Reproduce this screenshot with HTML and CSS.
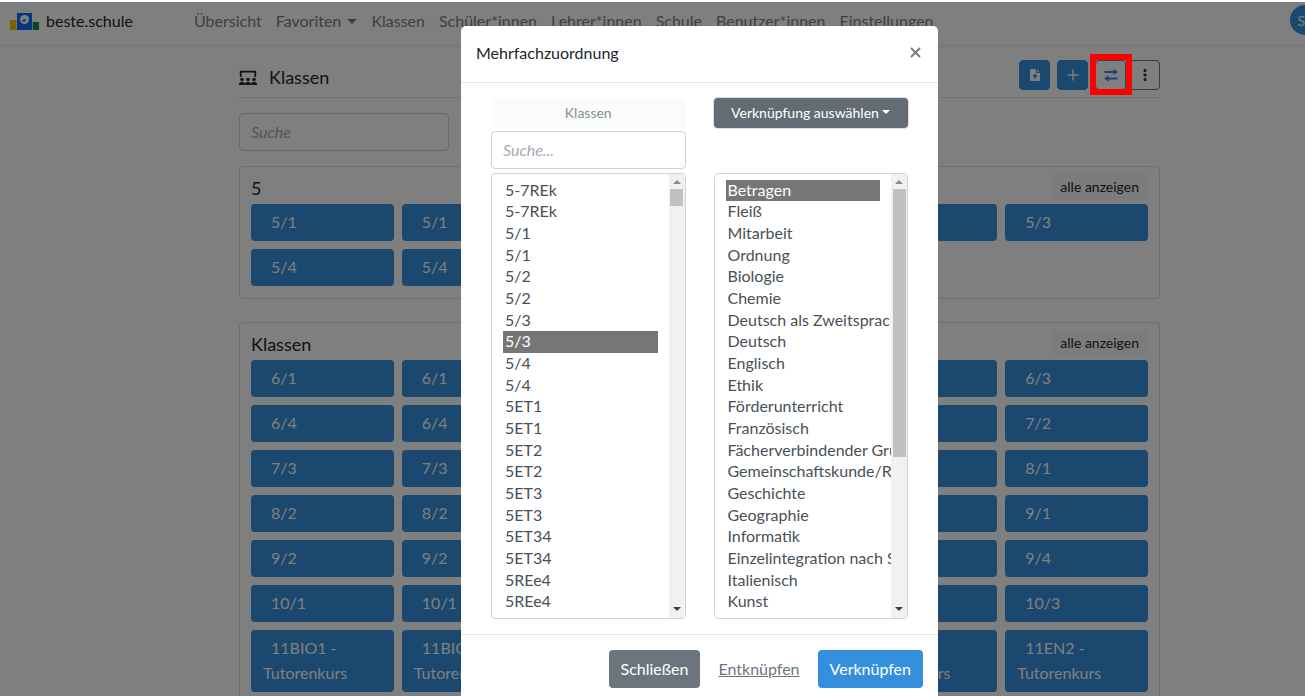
FILE: index.html
```html
<!DOCTYPE html>
<html lang="de">
<head>
<meta charset="utf-8">
<title>beste.schule – Klassen</title>
<link rel="stylesheet" href="styles.css">
</head>
<body>
<div class="app">
  <header class="navbar">
    <a class="brand" href="#">
      <svg class="brand-logo" width="30" height="20" viewBox="0 -3 30 20" aria-hidden="true">
        <rect x="0" y="7" width="6.500" height="10" fill="#ffc107"/>
        <rect x="7" y="0" width="15" height="17" fill="#0d6efd"/>
        <rect x="22.700" y="9" width="6.300" height="8" fill="#198754"/>
        <circle cx="14.500" cy="6.500" r="4.500" fill="#fff"/>
        <path d="M15.500 6v2.500h-3.500l1-2z" fill="#0d6efd"/>
      </svg>
      <span>beste.schule</span>
    </a>
    <nav class="menu">
      <a href="#">Übersicht</a>
      <a href="#">Favoriten <span class="caret caret-nav"></span></a>
      <a href="#">Klassen</a>
      <a href="#">Schüler*innen</a>
      <a href="#">Lehrer*innen</a>
      <a href="#">Schule</a>
      <a href="#">Benutzer*innen</a>
      <a href="#">Einstellungen</a>
    </nav>
    <button class="avatar" type="button" aria-label="Profil">SL</button>
  </header>

  <main class="content">
    <div class="page-head">
      <svg class="page-icon" width="18" height="16" viewBox="0 0 18 16" aria-hidden="true">
        <path d="M1.700 7V1.700h14.600V7" fill="none" stroke="#212529" stroke-width="1.800"/>
        <g fill="#212529">
          <circle cx="3" cy="9.500" r="1.700"/><circle cx="9" cy="9.500" r="1.700"/><circle cx="15" cy="9.500" r="1.700"/>
          <path d="M0 15c0-2 1-3 2-3h2c1 0 2 1 2 3zM6 15c0-2 1-3 2-3h2c1 0 2 1 2 3zM12 15c0-2 1-3 2-3h2c1 0 2 1 2 3z"/>
        </g>
      </svg>
      <h1>Klassen</h1>
      <div class="toolbar">
        <button class="tool tool-fill" type="button" aria-label="Importieren">
          <svg width="12" height="14" viewBox="0 0 12 14"><path d="M2 1h5.500L11 4.500V12a1 1 0 0 1-1 1H2a1 1 0 0 1-1-1V2a1 1 0 0 1 1-1z" fill="#fff"/><path d="M7.500 1v3.500H11M6 11V7M4 8.500l2-2 2 2" fill="none" stroke="#3490dc" stroke-width="1.200"/></svg>
        </button>
        <button class="tool tool-fill" type="button" aria-label="Hinzufügen">
          <svg width="12" height="12" viewBox="0 0 12 12"><path d="M6 1v10M1 6h10" stroke="#fff" stroke-width="1.400" stroke-linecap="round"/></svg>
        </button>
        <button class="tool tool-line" type="button" aria-label="Mehrfachzuordnung">
          <svg width="14" height="14" viewBox="0 0 14 14"><path d="M.5 4H11M3 10.500h10.500" stroke="#3490dc" stroke-width="1.800"/><path d="M9.500 .8l4.500 3.200-4.500 3.200zM4.500 7.300L0 10.500l4.500 3.200z" fill="#3490dc"/></svg>
        </button>
        <button class="tool tool-more" type="button" aria-label="Mehr">
          <svg width="4" height="12" viewBox="0 0 4 12" fill="#343a40"><rect x=".5" y="0" width="3" height="3" rx="1"/><rect x=".5" y="4.500" width="3" height="3" rx="1"/><rect x=".5" y="9" width="3" height="3" rx="1"/></svg>
        </button>
      </div>
    </div>
    <input class="search page-search" type="search" placeholder="Suche" aria-label="Suche">

    <section class="card">
      <div class="card-head"><h2>5</h2><button class="show-all" type="button">alle anzeigen</button></div>
      <div class="tiles">
        <a href="#">5/1</a><a href="#">5/1</a><a href="#">5/2</a><a href="#">5/2</a><a href="#">5/3</a><a href="#">5/3</a>
        <a href="#">5/4</a><a href="#">5/4</a>
      </div>
    </section>

    <section class="card">
      <div class="card-head"><h2>Klassen</h2><button class="show-all" type="button">alle anzeigen</button></div>
      <div class="tiles">
        <a href="#">6/1</a><a href="#">6/1</a><a href="#">6/2</a><a href="#">6/2</a><a href="#">6/3</a><a href="#">6/3</a>
        <a href="#">6/4</a><a href="#">6/4</a><a href="#">7/1</a><a href="#">7/1</a><a href="#">7/2</a><a href="#">7/2</a>
        <a href="#">7/3</a><a href="#">7/3</a><a href="#">7/4</a><a href="#">7/4</a><a href="#">8/1</a><a href="#">8/1</a>
        <a href="#">8/2</a><a href="#">8/2</a><a href="#">8/3</a><a href="#">8/3</a><a href="#">9/1</a><a href="#">9/1</a>
        <a href="#">9/2</a><a href="#">9/2</a><a href="#">9/3</a><a href="#">9/3</a><a href="#">9/4</a><a href="#">9/4</a>
        <a href="#">10/1</a><a href="#">10/1</a><a href="#">10/2</a><a href="#">10/2</a><a href="#">10/3</a><a href="#">10/3</a>
        <a href="#">11BIO1 - Tutorenkurs</a><a href="#">11BIO1 - Tutorenkurs</a><a href="#">11EN1 - Tutorenkurs</a><a href="#">11EN1 - Tutorenkurs</a><a href="#">11EN2 - Tutorenkurs</a><a href="#">11EN2 - Tutorenkurs</a>
      </div>
    </section>
  </main>

  <div class="backdrop">
    <div class="modal" role="dialog" aria-labelledby="modal-title">
      <div class="modal-head">
        <h2 id="modal-title">Mehrfachzuordnung</h2>
        <button class="close" type="button" aria-label="Schließen"><svg width="11" height="11" viewBox="0 0 11 11"><path d="M1 1l9 9M10 1l-9 9" stroke="#7b7b7b" stroke-width="1.800"/></svg></button>
      </div>
      <div class="modal-body">
        <div class="column">
          <button class="picker picker-light" type="button" disabled>Klassen</button>
          <input class="search" type="search" placeholder="Suche..." aria-label="Klassen suchen">
          <div class="list-wrap">
            <select class="list" multiple aria-label="Klassen">
              <option>5-7REk</option><option>5-7REk</option><option>5/1</option><option>5/1</option><option>5/2</option><option>5/2</option><option>5/3</option><option class="chosen">5/3</option><option>5/4</option><option>5/4</option><option>5ET1</option><option>5ET1</option><option>5ET2</option><option>5ET2</option><option>5ET3</option><option>5ET3</option><option>5ET34</option><option>5ET34</option><option>5REe4</option><option>5REe4</option><option>5TG1</option><option>5TG1</option>
            </select>
            <div class="scrollbar" aria-hidden="true"><i class="arrow arrow-up"></i><i class="track"><i class="thumb thumb-short"></i></i><i class="arrow arrow-down"></i></div>
          </div>
        </div>
        <div class="column">
          <button class="picker picker-dark" type="button">Verknüpfung auswählen <span class="caret"></span></button>
          <div class="list-wrap list-last">
            <select class="list" multiple aria-label="Verknüpfung">
              <option class="chosen">Betragen</option><option>Fleiß</option><option>Mitarbeit</option><option>Ordnung</option><option>Biologie</option><option>Chemie</option><option>Deutsch als Zweitsprache</option><option>Deutsch</option><option>Englisch</option><option>Ethik</option><option>Förderunterricht</option><option>Französisch</option><option>Fächerverbindender Grundkurs</option><option>Gemeinschaftskunde/Rechtserziehung</option><option>Geschichte</option><option>Geographie</option><option>Informatik</option><option>Einzelintegration nach SchulG</option><option>Italienisch</option><option>Kunst</option><option>Latein</option><option>Mathematik</option>
            </select>
            <div class="scrollbar" aria-hidden="true"><i class="arrow arrow-up"></i><i class="track"><i class="thumb thumb-long"></i></i><i class="arrow arrow-down"></i></div>
          </div>
        </div>
      </div>
      <div class="modal-foot">
        <button class="btn btn-grey" type="button">Schließen</button>
        <button class="btn btn-link" type="button">Entknüpfen</button>
        <button class="btn btn-blue" type="button">Verknüpfen</button>
      </div>
    </div>
  </div>
  <div class="highlight" aria-hidden="true"></div>
</div>
</body>
</html>
```
FILE: styles.css
```css
* { box-sizing: border-box; }
html, body { height: 100%; }
body {
  margin: 0;
  padding-top: 2px;
  overflow: hidden;
  background: #fff;
  color: #212529;
  font-family: Lato, "Open Sans", sans-serif;
  font-size: 16px;
  line-height: 25px;
}
button, input, select { font: inherit; color: inherit; margin: 0; }
button { cursor: pointer; }
a { color: inherit; text-decoration: none; }
h1, h2 { margin: 0; font-size: 18px; font-weight: 400; }

/* The app runs past the right edge of the window. */
.app {
  position: relative;
  width: calc(100% + 94px);
  height: 100%;
  overflow: hidden;
  background: #fff;
}
.navbar {
  display: flex;
  align-items: center;
  height: 42px;
  padding: 0 79px 6px 10px;
  box-shadow: 0 2px 4px rgba(0, 0, 30, .08);
}
.brand { display: flex; align-items: center; gap: 6px; width: 184px; }
.menu { display: flex; flex: 1; gap: 14px; color: #7f7f7f; white-space: nowrap; }
.avatar {
  flex: none;
  width: 30px;
  height: 30px;
  padding: 0;
  border: 0;
  border-radius: 50%;
  background: #3490dc;
  color: #fff;
  font-size: 14px;
}
.caret {
  display: inline-block;
  border: 4px solid transparent;
  border-top-color: currentColor;
  border-bottom: 0;
  vertical-align: 4px;
}
.caret-nav { border-width: 5px 5px 0; margin-left: 2px; vertical-align: 3px; }

.content { width: 921px; max-width: 100%; margin: 0 auto; padding-top: 14px; }
.page-head {
  display: flex;
  align-items: center;
  height: 40px;
  border-bottom: 1px solid #dee2e6;
}
.page-head h1 { margin-left: 12px; flex: 1; }
.toolbar { display: flex; gap: 7px; padding-bottom: 6px; }
.tool {
  display: grid;
  place-items: center;
  width: 31px;
  height: 30px;
  padding: 0;
  border: 1px solid #3490dc;
  border-radius: 4px;
  background: #fff;
}
.tool-fill { background: #3490dc; }
.tool-more { border-color: #6c757d; margin-left: -4px; }
.search {
  display: block;
  width: 100%;
  height: 38px;
  padding: 0 11px 2px;
  border: 1px solid #ced4da;
  border-radius: 4px;
  background: #fff;
  outline: 0;
  appearance: none;
}
.search::placeholder { color: #a2aab2; font-style: italic; opacity: 1; }
.page-search { width: 210px; margin: 15px 0; }

.card {
  margin-bottom: 23px;
  padding: 9px 11px 12px;
  border: 1px solid #dfdfdf;
  border-radius: 4px;
}
.card-head {
  display: flex;
  justify-content: space-between;
  align-items: center;
  height: 28px;
  padding-bottom: 3px;
}
.show-all {
  height: 25px;
  padding: 0 9px;
  margin-bottom: 4px;
  border: 0;
  border-radius: 4px;
  background: #f8f9fa;
  font-size: 14px;
}
.tiles { display: grid; grid-template-columns: repeat(6, 1fr); gap: 8px; }
.tiles a {
  padding: 5px 12px 7px;
  border-radius: 4px;
  background: #3490dc;
  color: #fff;
  text-indent: 8px;
}

.backdrop {
  position: absolute;
  inset: 0;
  background: rgba(0, 0, 0, .5);
}
.modal {
  width: 477px;
  max-width: 100%;
  margin: 24px auto;
  border-radius: 5px;
  background: #fff;
}
.modal-head {
  display: flex;
  align-items: center;
  justify-content: space-between;
  height: 57px;
  padding: 0 15px 3px;
  border-bottom: 1px solid #e3e6e9;
}
.modal-head h2 { font-size: 16px; }
.close { display: grid; place-items: center; width: 15px; height: 24px; padding: 0; border: 0; background: none; }
.modal-body {
  display: grid;
  grid-template-columns: 1fr 1fr;
  gap: 28px;
  padding: 15px 30px;
}
.column { display: flex; flex-direction: column; min-width: 0; }
.column .search { margin: 3px 0 4px; }
.picker {
  height: 30px;
  padding: 0;
  border: 0;
  border-radius: 4px;
  font-size: 14px;
  line-height: 20px;
}
.picker-light { background: #fafcfb; color: #8b8f92; }
.picker-dark { background: #636c74; color: #fff; box-shadow: 0 0 0 1px #d9dcdf; }
.list-wrap { position: relative; height: 446px; }
.list-last { margin-top: auto; }
.list {
  display: block;
  width: 100%;
  height: 100%;
  padding: 6px 27px 0 11px;
  border: 1px solid #ced4da;
  border-radius: 4px;
  outline: 0;
  overflow: hidden;
  background: #fff;
  color: #495057;
}
.list option { min-height: 0; padding: 0 2px 3px; }
.list option:nth-child(3n + 1) { padding-bottom: 2px; }
.list .chosen { background: #767676; color: #fff; }
.scrollbar {
  position: absolute;
  inset: 1px 1px 1px auto;
  display: flex;
  flex-direction: column;
  align-items: center;
  width: 16px;
  background: #f1f1f1;
}
.arrow { margin: 6px 0 5px; border: 4px solid transparent; }
.arrow-up { border-top: 0; border-bottom-color: #8b8b8b; }
.arrow-down { border-bottom: 0; border-top-color: #404040; margin: 5px 0 7px; }
.track { flex: 1; width: 13px; }
.thumb { display: block; background: #c1c1c1; }
.thumb-short { height: 17px; }
.thumb-long { height: 65%; }

.modal-foot {
  display: flex;
  justify-content: flex-end;
  gap: 6px;
  padding: 15px;
  border-top: 1px solid #e3e6e9;
}
.btn { height: 38px; padding: 0 12px 2px; border: 0; border-radius: 4px; color: #fff; }
.btn-grey { background: #6c757d; }
.btn-blue { background: #3490dc; }
.btn-link { background: none; color: #6c757d; text-decoration: underline; }

/* Marks the toolbar button that opens the dialog. */
.highlight {
  position: absolute;
  top: 52px;
  right: 267px;
  width: 42px;
  height: 41px;
  border: 6px solid #f00;
}
```
